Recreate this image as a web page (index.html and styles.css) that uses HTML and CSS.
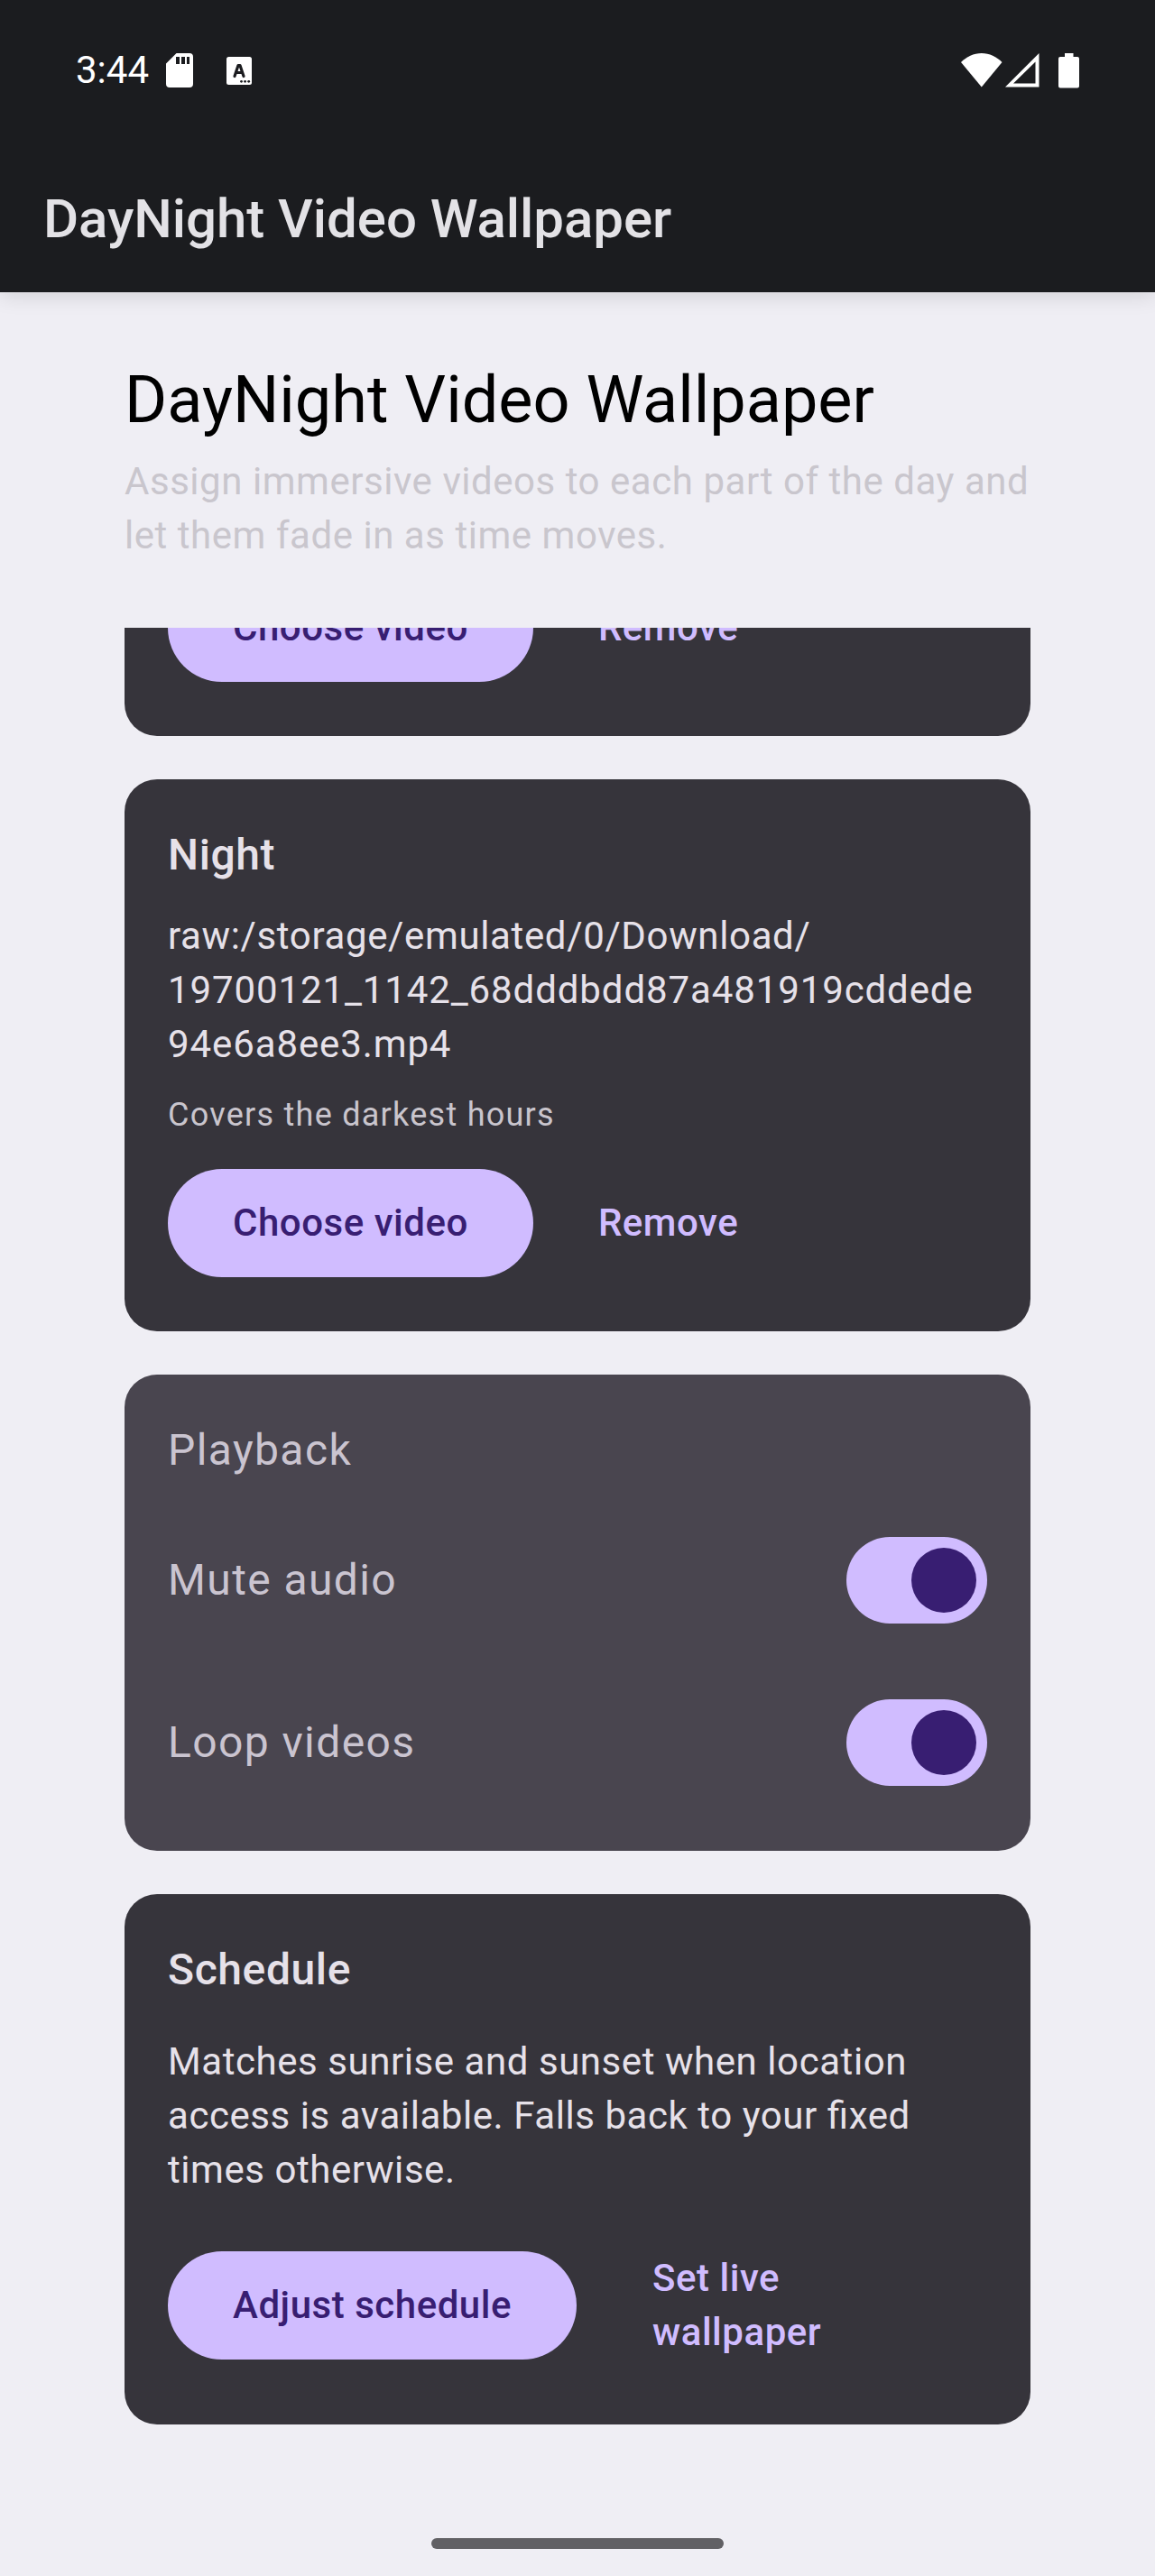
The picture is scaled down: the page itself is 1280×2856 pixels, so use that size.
FILE: index.html
```html
<!DOCTYPE html>
<html lang="en">
<head>
<meta charset="utf-8">
<title>DayNight Video Wallpaper</title>
<link rel="stylesheet" href="styles.css">
</head>
<body>
<div class="screen">
  <header class="app-bar">
    <div class="status-bar">
      <span class="clock">3:44</span>
      <svg class="icon-sd" width="30" height="38" viewBox="0 0 30 38"><path fill="#fff" fill-rule="evenodd" d="M11.500 0H26a4 4 0 0 1 4 4v30a4 4 0 0 1-4 4H4a4 4 0 0 1-4-4V11.500zM11 4v8h4V4zM17 4v8h4V4zM23 4v8h3V4z"/></svg>
      <svg class="icon-keyboard" width="28" height="31" viewBox="0 0 28 31"><rect width="28" height="31" rx="2.500" fill="#fff"/><path d="M9 21.500 13 9.500H15L19 21.500M10.500 17.500H17.500" fill="none" stroke="#1b1c1f" stroke-width="3.200" stroke-linecap="round" stroke-linejoin="round"/><g fill="#1b1c1f"><circle cx="16.500" cy="27.300" r="1.400"/><circle cx="20.600" cy="27.300" r="1.400"/><circle cx="24.700" cy="27.300" r="1.400"/></g></svg>
      <div class="system-icons">
        <svg width="46" height="38" viewBox="0 0 46 38"><path fill="#fff" d="M0 10C6 4 14 0 22.800 0S39.500 4 45.500 10L22.800 37.500z"/></svg>
        <svg class="icon-signal" width="38" height="38" viewBox="0 0 38 38"><path fill="#fff" fill-rule="evenodd" d="M37.500 0V37.500H0zM33.500 9.500 9 33.500H33.500z"/></svg>
        <svg class="icon-battery" width="23" height="39" viewBox="0 0 23 39"><path fill="#fff" d="M7 0H16.500V4H21a2 2 0 0 1 2 2V36.500a2 2 0 0 1-2 2H2a2 2 0 0 1-2-2V6A2 2 0 0 1 2 4H7z"/></svg>
      </div>
    </div>
    <div class="toolbar">DayNight Video Wallpaper</div>
  </header>

  <main class="content">
    <section class="intro">
      <h1 class="headline">DayNight Video Wallpaper</h1>
      <p class="subtitle">Assign immersive videos to each part of the day and let them fade in as time moves.</p>
    </section>

    <div class="scroller">
      <section class="card">
        <div class="actions">
          <button class="btn btn-filled">Choose video</button>
          <button class="btn btn-text">Remove</button>
        </div>
      </section>

      <section class="card">
        <h2 class="card-title">Night</h2>
        <p class="body gap-m"><span class="path-dir">raw:/storage/emulated/0/Download/</span><wbr><span class="path-file">19700121_1142_68dddbdd87a481919cddede<wbr>94e6a8ee3.mp4</span></p>
        <p class="caption">Covers the darkest hours</p>
        <div class="actions gap-m">
          <button class="btn btn-filled">Choose video</button>
          <button class="btn btn-text">Remove</button>
        </div>
      </section>

      <section class="card card-variant">
        <h2 class="setting-label">Playback</h2>
        <div class="setting">
          <span class="setting-label">Mute audio</span>
          <span class="switch"><span class="thumb"></span></span>
        </div>
        <div class="setting">
          <span class="setting-label">Loop videos</span>
          <span class="switch"><span class="thumb"></span></span>
        </div>
      </section>

      <section class="card">
        <h2 class="card-title">Schedule</h2>
        <p class="body gap-l">Matches sunrise and sunset when location access is available. Falls back to your fixed times otherwise.</p>
        <div class="actions actions-tall gap-l">
          <button class="btn btn-filled">Adjust schedule</button>
          <button class="btn btn-text btn-wide">Set live<br>wallpaper</button>
        </div>
      </section>
    </div>
  </main>

  <footer class="nav-bar"><div class="nav-handle"></div></footer>
</div>
</body>
</html>
```
FILE: styles.css
```css
* {
  box-sizing: border-box;
  margin: 0;
  padding: 0;
}

body {
  font-family: Roboto, "Liberation Sans", sans-serif;
  background: #efeef4;
}

.screen {
  display: flex;
  flex-direction: column;
  width: 1280px;
  height: 2856px;
  overflow: hidden;
  background: #efeef4;
}

.app-bar {
  height: 324px;
  flex: none;
  background: #1b1c1f;
  box-shadow: 0 4px 22px rgba(0, 0, 0, 0.12);
}

.status-bar {
  display: flex;
  align-items: center;
  height: 156px;
  padding: 0 84px;
}

.clock {
  font-size: 42px;
  line-height: 60px;
  color: #fff;
}

.icon-sd {
  margin-left: 19px;
}

.icon-keyboard {
  margin-left: 37px;
}

.system-icons {
  display: flex;
  align-items: center;
  margin-left: auto;
}

.icon-signal {
  margin-left: 3px;
}

.icon-battery {
  margin-left: 21px;
}

.toolbar {
  padding: 51px 48px 0;
  font-size: 60px;
  line-height: 72px;
  font-weight: 500;
  letter-spacing: -0.05px;
  color: #e3e2e6;
}

.content {
  flex: none;
  padding: 72px 138px 0;
}

.intro {
  height: 300px;
}

.headline {
  font-size: 72px;
  line-height: 96px;
  font-weight: 400;
  color: #000;
}

.subtitle {
  margin-top: 12px;
  font-size: 42px;
  line-height: 60px;
  letter-spacing: 0.54px;
  color: #c9c6cd;
}

.scroller {
  display: flex;
  flex-direction: column;
  justify-content: flex-end;
  gap: 48px;
  height: 1992px;
  overflow: hidden;
}

.card {
  flex: none;
  padding: 48px;
  border-radius: 36px;
  background: #36343b;
  color: #e6e1e9;
}

.card-variant {
  background: #49454f;
  color: #cac4d0;
}

.card-title {
  font-size: 48px;
  line-height: 72px;
  font-weight: 500;
  letter-spacing: 0.6px;
}

.body {
  font-size: 42px;
  line-height: 60px;
  letter-spacing: 0.56px;
  font-feature-settings: "liga" 1;
}

.path-dir {
  letter-spacing: 0.64px;
}

.path-file {
  letter-spacing: 0.89px;
}

.caption {
  margin-top: 24px;
  font-size: 36px;
  line-height: 48px;
  letter-spacing: 1.26px;
  color: #c9c5cd;
}

.gap-m {
  margin-top: 24px;
}

.gap-l {
  margin-top: 36px;
}

.actions {
  display: flex;
  align-items: center;
  height: 144px;
}

.actions-tall {
  height: 168px;
  padding: 24px 0;
}

.btn {
  border: 0;
  background: none;
  font: 500 42px/60px Roboto, "Liberation Sans", sans-serif;
  letter-spacing: 0.53px;
}

.btn-filled {
  height: 120px;
  padding: 0 72px;
  border-radius: 60px;
  background: #d0bcff;
  color: #381e72;
}

.btn-text {
  padding: 0 72px;
  text-align: left;
  color: #d0bcff;
}

.btn-wide {
  padding-left: 84px;
}

.setting {
  display: flex;
  align-items: center;
  justify-content: space-between;
  height: 144px;
  margin-top: 36px;
}

.setting-label {
  font-size: 48px;
  line-height: 72px;
  font-weight: 400;
  letter-spacing: 1.4px;
}

.switch {
  display: flex;
  justify-content: flex-end;
  width: 156px;
  height: 96px;
  padding: 12px;
  border-radius: 48px;
  background: #d0bcff;
}

.thumb {
  width: 72px;
  height: 72px;
  border-radius: 50%;
  background: #381e72;
}

.nav-bar {
  display: flex;
  justify-content: center;
  padding-top: 126px;
}

.nav-handle {
  width: 324px;
  height: 12px;
  border-radius: 6px;
  background: #616064;
}
```
